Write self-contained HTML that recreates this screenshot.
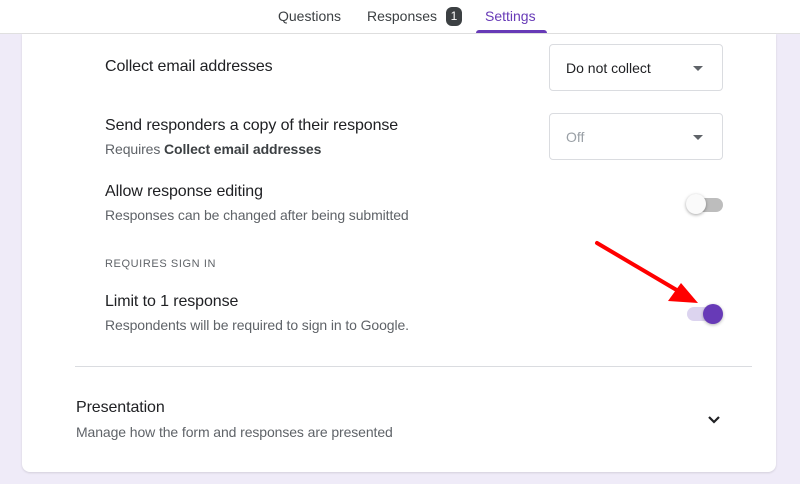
<!DOCTYPE html>
<html><head><style>
body{margin:0;width:800px;height:484px;background:#efebf8;font-family:"Liberation Sans",sans-serif;position:relative;overflow:hidden;color:#202124}
.hdr{position:absolute;left:0;top:0;width:800px;height:33px;background:#fff;border-bottom:1px solid #e0e0e0}
.tab{position:absolute;top:8px;font-size:14px;color:#3c4043}
.card{position:absolute;left:22px;top:34px;width:754px;height:438px;background:#fff;border-radius:0 0 8px 8px;box-shadow:0 1px 2px rgba(0,0,0,.12)}
.t{position:absolute;font-size:16px;color:#202124;letter-spacing:-0.1px}
.s{position:absolute;font-size:14px;color:#5f6368;letter-spacing:-0.1px}
.sel{position:absolute;left:549px;width:174px;height:47px;border:1px solid #dadce0;border-radius:4px;box-sizing:border-box;font-size:14px}
.sel span{position:absolute;left:16px;top:15px}
.sel i{position:absolute;right:19px;top:21px;border:5px solid transparent;border-top-color:#5f6368}
</style></head><body>
<div class="hdr">
<span class="tab" style="left:278px">Questions</span>
<span class="tab" style="left:367px">Responses</span>
<span style="position:absolute;left:446px;top:7px;width:16px;height:19px;border-radius:6px;background:#3c4043;color:#fff;font-size:12px;text-align:center;line-height:19px">1</span>
<span class="tab" style="left:485px;color:#673ab7">Settings</span>
<div style="position:absolute;left:476px;top:30px;width:71px;height:3px;background:#673ab7;border-radius:3px 3px 0 0"></div>
</div>
<div class="card"></div>
<div class="t" style="left:105px;top:58px">Collect email addresses</div>
<div class="sel" style="top:44px"><span>Do not collect</span><i></i></div>
<div class="t" style="left:105px;top:117px">Send responders a copy of their response</div>
<div class="s" style="left:105px;top:141px">Requires <b style="color:#3c4043">Collect email addresses</b></div>
<div class="sel" style="top:113px;color:#9aa0a6"><span>Off</span><i style="border-top-color:#5f6368"></i></div>
<div class="t" style="left:105px;top:183px">Allow response editing</div>
<div class="s" style="left:105px;top:207px">Responses can be changed after being submitted</div>
<div style="position:absolute;left:689px;top:198px;width:34px;height:14px;border-radius:7px;background:#bdbdbd"></div>
<div style="position:absolute;left:686px;top:194px;width:20px;height:20px;border-radius:50%;background:#fafafa;box-shadow:0 1px 3px rgba(0,0,0,.35)"></div>
<div style="position:absolute;left:105px;top:258px;font-size:11px;letter-spacing:.6px;color:#5f6368">REQUIRES SIGN IN</div>
<div class="t" style="left:105px;top:293px">Limit to 1 response</div>
<div class="s" style="left:105px;top:317px">Respondents will be required to sign in to Google.</div>
<div style="position:absolute;left:687px;top:307px;width:34px;height:14px;border-radius:7px;background:#dcd4ef"></div>
<div style="position:absolute;left:703px;top:304px;width:20px;height:20px;border-radius:50%;background:#673ab7;box-shadow:0 1px 3px rgba(0,0,0,.3)"></div>
<svg style="position:absolute;left:0;top:0" width="800" height="484"><line x1="597" y1="243" x2="680" y2="292" stroke="#f00" stroke-width="4" stroke-linecap="round"/><polygon points="698,303 668,301 681,283" fill="#f00"/></svg>
<div style="position:absolute;left:75px;top:366px;width:677px;height:1px;background:#dadce0"></div>
<div class="t" style="left:76px;top:399px">Presentation</div>
<div class="s" style="left:76px;top:424px">Manage how the form and responses are presented</div>
<svg style="position:absolute;left:707px;top:415px" width="14" height="10"><path d="M2 2 L7 7 L12 2" stroke="#202124" stroke-width="2.2" fill="none"/></svg>
</body></html>
